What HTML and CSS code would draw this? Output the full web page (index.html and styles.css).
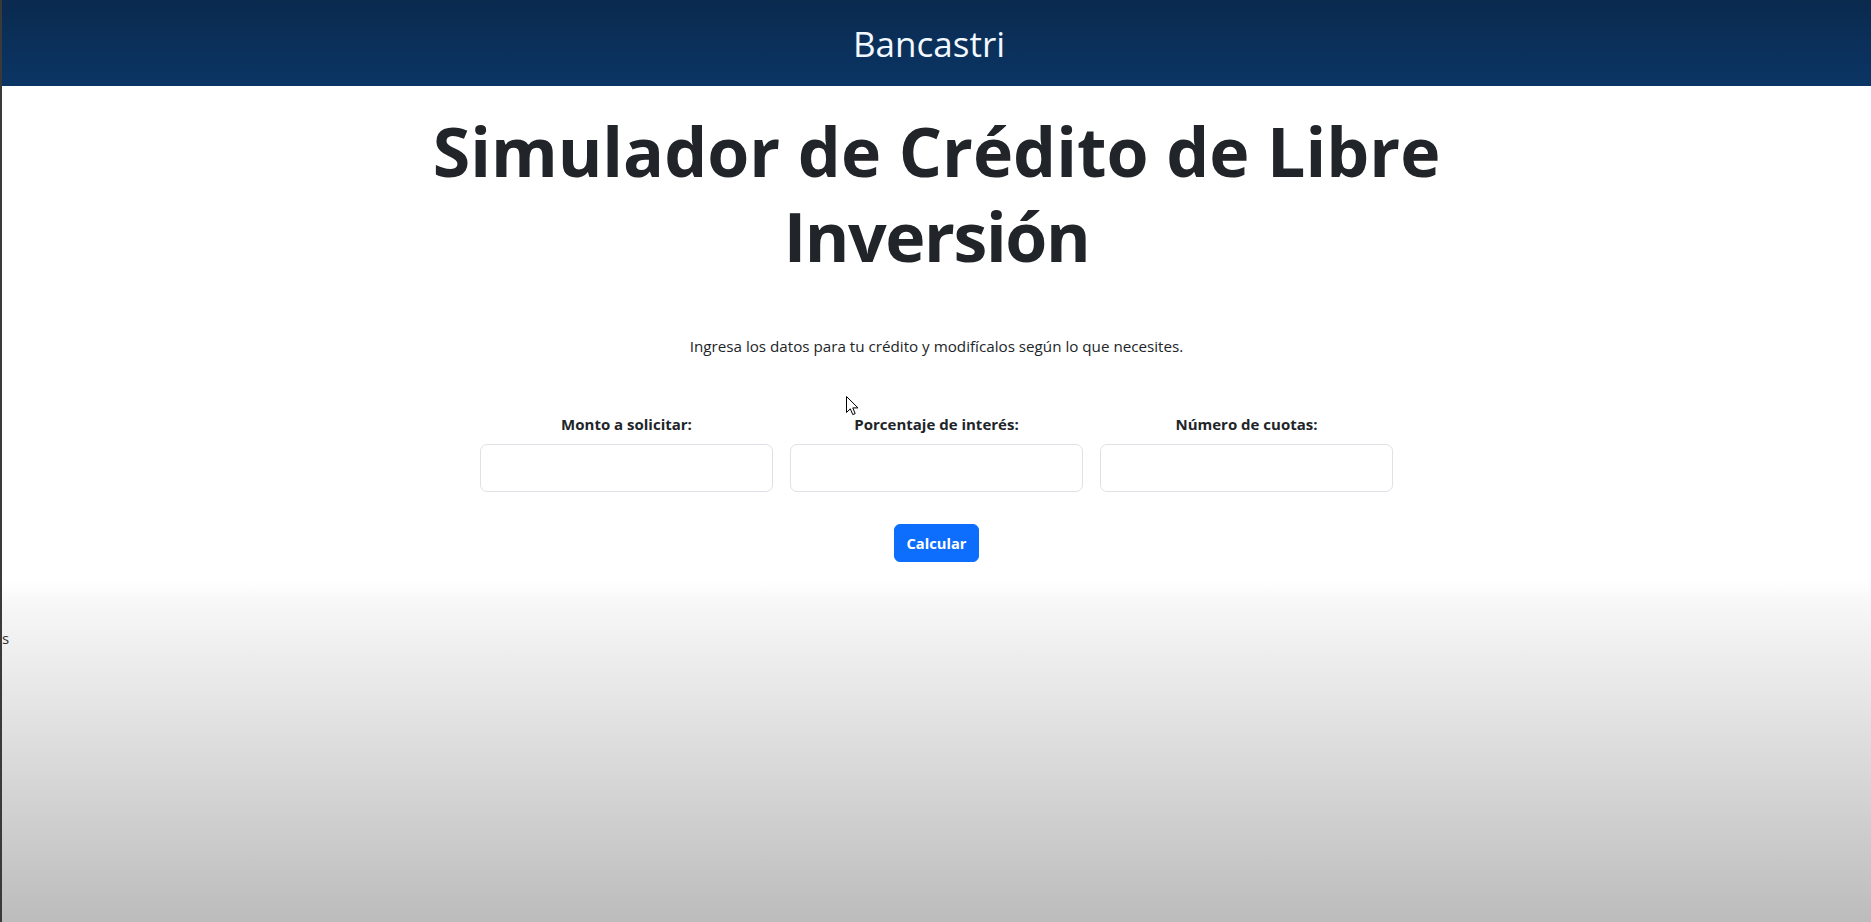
FILE: index.html
```html
<!DOCTYPE html>
<html lang="es">
<head>
<meta charset="utf-8">
<title>Bancastri - Simulador de Crédito</title>
<link rel="stylesheet" href="styles.css">
</head>
<body>
<header class="topbar">
  <span class="brand">Bancastri</span>
</header>
<main class="content">
  <h1 class="title">Simulador de Crédito de Libre <span class="title-tail">Inversión</span></h1>
  <p class="lead">Ingresa los datos para tu crédito y modifícalos según lo que necesites.</p>
  <form class="sim-form">
    <div class="fields">
      <div class="field">
        <label class="field-label" for="monto">Monto a solicitar:</label>
        <input class="field-input" id="monto" type="text">
      </div>
      <div class="field">
        <label class="field-label" for="interes">Porcentaje de interés:</label>
        <input class="field-input" id="interes" type="text">
      </div>
      <div class="field">
        <label class="field-label" for="cuotas">Número de cuotas:</label>
        <input class="field-input" id="cuotas" type="text">
      </div>
    </div>
    <button class="btn-calc" type="button">Calcular</button>
  </form>
</main>
<span class="stray">s</span>
<svg class="pointer" width="13" height="20" viewBox="0 0 13 20"><path d="M0.5 0.5 L0.5 16.5 L4.3 12.8 L6.8 18.6 L9.2 17.6 L6.8 11.9 L12 11.9 Z" fill="#fff" stroke="#000" stroke-width="1"/></svg>
</body>
</html>
```
FILE: styles.css
```css
html, body {
  margin: 0;
  padding: 0;
  height: 100%;
}
body {
  border-left: 2px solid #3a3a3a;
  min-height: 922px;
  box-sizing: border-box;
  font-family: "Open Sans", "Noto Sans", sans-serif;
  color: #212529;
  background: linear-gradient(to bottom, #ffffff 0, #ffffff 580px, #f8f8f8 600px, #bcbcbc 922px);
  position: relative;
  overflow: hidden;
}
.topbar {
  height: 86px;
  padding-right: 15px;
  display: flex;
  align-items: center;
  justify-content: center;
  background: linear-gradient(to bottom, #0a2a4e, #0b3565);
}
.brand {
  color: #f2f8ff;
  font-size: 35px;
  line-height: 1;
}
.content {
  display: flex;
  flex-direction: column;
  align-items: center;
}
.title {
  margin: 22px 0 0;
  width: 1200px;
  text-align: center;
  font-size: 68px;
  line-height: 85px;
  font-weight: 700;
}
.title-tail {
  letter-spacing: -1.4px;
}
.lead {
  margin: 56px 0 0;
  font-size: 15.2px;
  line-height: 24px;
}
.sim-form {
  margin-top: 54px;
  display: flex;
  flex-direction: column;
  align-items: center;
}
.fields {
  display: flex;
  gap: 17px;
}
.field {
  width: 293px;
  display: flex;
  flex-direction: column;
  align-items: center;
}
.field-label {
  font-weight: 700;
  font-size: 15px;
  line-height: 24px;
  margin-bottom: 8px;
}
.field-input {
  width: 100%;
  height: 48px;
  box-sizing: border-box;
  border: 1px solid #dee2e6;
  border-radius: 7px;
  background: #fff;
  font-size: 20px;
  padding: 8px 16px;
}
.btn-calc {
  margin-top: 32px;
  height: 38px;
  padding: 0 12px;
  border: 1px solid #0d6efd;
  border-radius: 6px;
  background: #0d6efd;
  color: #fff;
  font-family: inherit;
  font-weight: 700;
  font-size: 14.7px;
}
.stray {
  position: absolute;
  left: 0;
  top: 628px;
  font-size: 15px;
  color: #333;
}
.pointer {
  position: absolute;
  left: 844px;
  top: 396px;
}
```
